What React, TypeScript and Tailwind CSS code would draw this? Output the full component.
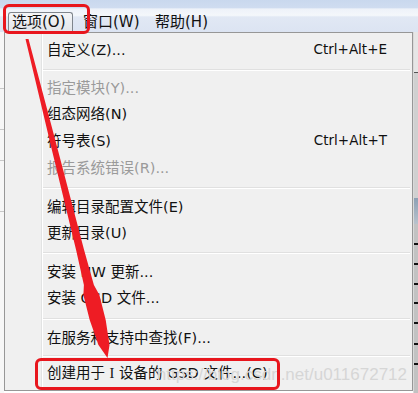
import React from "react";

type ItemProps = {
  label: React.ReactNode;
  shortcut?: string;
  disabled?: boolean;
  h: string;
};

function Item({ label, shortcut, disabled, h }: ItemProps) {
  return (
    <div
      className={`flex items-center justify-between pl-[4px] pr-[25px] text-[14.5px] leading-none ${h} ${
        disabled ? "text-[#9a9a9a]" : "text-[#111111]"
      }`}
    >
      <span className="whitespace-nowrap">{label}</span>
      {shortcut && <span className="whitespace-nowrap text-[13.5px]">{shortcut}</span>}
    </div>
  );
}

function Sep({ h }: { h: string }) {
  return (
    <div className={`flex flex-col justify-center pr-[2px] ${h}`}>
      <div className="h-px bg-[#e0e0e0]" />
      <div className="h-px bg-white" />
    </div>
  );
}

export default function App() {
  return (
    <div className="relative w-[418px] h-[393px] overflow-hidden bg-white font-['DejaVu_Sans','Noto_Sans_CJK_SC',sans-serif]">
      {/* menu bar */}
      <div className="flex h-[32px] items-end pl-[8px] bg-[linear-gradient(to_bottom,#c9d8ee_0%,#cfdcf0_24%,#eef2f9_28%,#f4f7fb_48%,#e1e8f4_53%,#dce4f2_100%)] text-[15px] leading-none text-[#111111]">
        <div className="flex h-[20px] w-[65px] items-center rounded-t-[3px] border border-b-0 border-[#7f858c] bg-[linear-gradient(to_bottom,#f4f5f7,#e2e5e9)] pl-[3px]">
          选项(O)
        </div>
        <div className="ml-[10px] flex h-[20px] w-[72px] items-center">窗口(W)</div>
        <div className="flex h-[20px] items-center">帮助(H)</div>
      </div>

      {/* body */}
      <div className="flex h-[361px]">
        {/* left background strip */}
        <div className="flex w-[4px] flex-col bg-[#f7f7f7]">
          <div className="h-[56px]" />
          <div className="h-px bg-[#c8c8c8]" />
          <div className="h-[40px]" />
          <div className="h-px bg-[#c8c8c8]" />
          <div className="h-[30px]" />
          <div className="h-px bg-[#c8c8c8]" />
          <div className="h-[50px]" />
          <div className="h-px bg-[#c8c8c8]" />
        </div>

        {/* dropdown menu */}
        <div className="flex h-[359px] w-[409px] border border-[#979797] bg-[#f0f0f0]">
          <div className="w-[37px] border-r border-[#e2e3e3]" />
          <div className="w-px bg-white" />
          <div className="flex flex-1 flex-col pt-[3px]">
            <Item h="h-[28px]" label="自定义(Z)..." shortcut="Ctrl+Alt+E" />
            <Sep h="h-[11px]" />
            <Item h="h-[26px]" label="指定模块(Y)..." disabled />
            <Item h="h-[26px]" label="组态网络(N)" />
            <Item h="h-[28px]" label="符号表(S)" shortcut="Ctrl+Alt+T" />
            <Item h="h-[27px]" label="报告系统错误(R)..." disabled />
            <Sep h="h-[12px]" />
            <Item h="h-[26px]" label="编辑目录配置文件(E)" />
            <Item h="h-[26px]" label="更新目录(U)" />
            <Sep h="h-[13px]" />
            <Item h="h-[26px]" label="安装 HW 更新..." />
            <Item h="h-[27px]" label="安装 GSD 文件..." />
            <Sep h="h-[13px]" />
            <Item h="h-[27px]" label="在服务和支持中查找(F)..." />
            <Sep h="h-[8px]" />
            <Item
              h="h-[26px]"
              label={
                <>
                  创建用于 <span className="font-['Liberation_Serif',serif]">I</span> 设备的 GSD 文件...(C)
                </>
              }
            />
          </div>
        </div>

        {/* right background strip */}
        <div className="flex flex-1 flex-col border-l border-[#dadada] bg-[#c2c2c2]">
          <div className="h-[40px] bg-[#e6e6e6]" />
          <div className="h-px bg-[#555555]" />
          <div className="h-[125px] bg-[#d0d0d0]" />
          <div className="h-[26px] bg-[linear-gradient(to_bottom,#8da0b4,#b8c2cc)]" />
          <div className="h-[19px]" />
          <div className="h-[2px] bg-[#111111]" />
          <div className="h-[18px]" />
          <div className="h-[2px] bg-[#111111]" />
          <div className="h-[18px]" />
          <div className="h-[2px] bg-[#111111]" />
          <div className="h-[17px]" />
          <div className="h-[2px] bg-[#111111]" />
          <div className="h-[18px]" />
          <div className="h-[2px] bg-[#111111]" />
          <div className="h-[19px]" />
          <div className="h-[2px] bg-[#111111]" />
          <div className="h-[18px]" />
          <div className="h-[2px] bg-[#111111]" />
        </div>
      </div>

      {/* watermark */}
      <span className="pointer-events-none absolute right-[11px] top-[366px] whitespace-nowrap font-['Liberation_Sans',Arial,sans-serif] text-[17px] leading-none text-[#d6d6d6]">
        https://blog.csdn.net/u011672712
      </span>

      {/* annotations */}
      <div className="pointer-events-none absolute left-[3px] top-[4px] h-[30px] w-[87px] rounded-[6px] border-[3px] border-[#e8161d]" />
      <div className="pointer-events-none absolute left-[35px] top-[358px] h-[32px] w-[245px] rounded-[6px] border-[3px] border-[#e8161d]" />
      <svg className="pointer-events-none absolute left-0 top-0" width="418" height="393" viewBox="0 0 418 393">
        <polygon
          fill="#ee1c24"
          points="28.5,39 57.9,150 84.1,250 93.9,285 99.4,295 105.7,320 109.5,345 107.5,358 98.5,345 89.7,320 83.4,295 83.9,285 76.1,250 51.9,150 25.5,39"
        />
      </svg>
    </div>
  );
}
